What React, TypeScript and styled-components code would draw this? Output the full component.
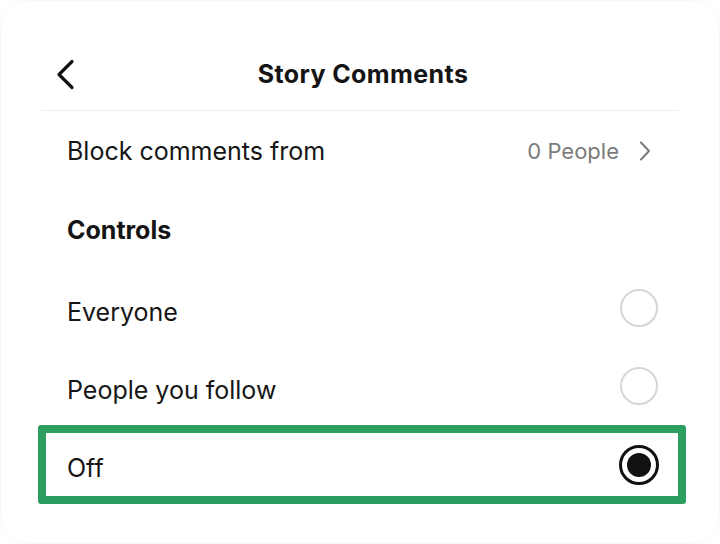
import React from "react";
import styled, { createGlobalStyle } from "styled-components";

const GlobalStyle = createGlobalStyle`
  html, body {
    margin: 0;
    padding: 0;
    background: #ffffff;
  }
  body {
    font-family: Inter, "Noto Sans", "Liberation Sans", sans-serif;
    color: #141414;
    -webkit-font-smoothing: antialiased;
  }
  * { box-sizing: border-box; }
`;

const Screen = styled.div`
  width: 720px;
  height: 544px;
  background: #ffffff;
  border: 1px solid #f7f7f7;
  border-radius: 30px;
  overflow: hidden;
  display: flex;
  flex-direction: column;
`;

const Header = styled.header`
  margin: 0 40px;
  padding-top: 37px;
  height: 110px;
  border-bottom: 1px solid #efefef;
`;

const HeaderBar = styled.div`
  height: 72px;
  display: grid;
  grid-template-columns: 1fr auto 1fr;
  align-items: center;
`;

const BackButton = styled.button`
  justify-self: start;
  margin-left: 14px;
  padding: 0;
  border: none;
  background: none;
  width: 20px;
  height: 31px;
  display: flex;
  align-items: center;
  justify-content: center;
  color: #111111;
`;

const Title = styled.h1`
  margin: 0;
  font-size: 25px;
  font-weight: 700;
  letter-spacing: 0.4px;
  color: #141414;
  padding-left: 6px;
`;

const Content = styled.main`
  padding: 0 60px 0 66px;
  display: flex;
  flex-direction: column;
`;

const LinkRow = styled.div`
  height: 80px;
  display: flex;
  align-items: center;
  justify-content: space-between;
`;

const RowLabel = styled.span<{ $drop?: boolean }>`
  font-size: 25px;
  font-weight: 400;
  color: #161616;
  margin-top: ${(p) => (p.$drop ? "7px" : "0")};
`;

const RowValue = styled.span`
  display: flex;
  align-items: center;
  gap: 20px;
  margin-right: 8px;
  font-size: 22px;
  color: #7b7b7b;
`;

const SectionTitle = styled.h2`
  margin: 0;
  height: 78px;
  display: flex;
  align-items: center;
  font-size: 25px;
  font-weight: 700;
  color: #141414;
`;

const Option = styled.div<{ $highlighted?: boolean }>`
  height: ${(p) => (p.$highlighted ? "79px" : "78px")};
  display: flex;
  align-items: center;
  justify-content: space-between;
  ${(p) =>
    p.$highlighted
      ? `
    margin: 0 -27px 0 -29px;
    padding: 0 19px 0 21px;
    border: 8px solid #2b9d5e;
    border-radius: 3px;
  `
      : ""}
`;

const Radio = styled.span<{ $checked?: boolean }>`
  flex: none;
  border-radius: 50%;
  display: flex;
  align-items: center;
  justify-content: center;
  ${(p) =>
    p.$checked
      ? `
    width: 40px;
    height: 40px;
    border: 3.5px solid #111111;
  `
      : `
    width: 38px;
    height: 38px;
    margin-right: 1px;
    border: 2px solid #d6d6d6;
  `}
`;

const RadioDot = styled.span`
  width: 24px;
  height: 24px;
  border-radius: 50%;
  background: #111111;
`;

const BackIcon = () => (
  <svg width="20" height="31" viewBox="0 0 20 31" fill="none">
    <path
      d="M17 2.5 L4 15.5 L17 28.5"
      stroke="currentColor"
      strokeWidth="3.2"
      strokeLinecap="round"
      strokeLinejoin="round"
    />
  </svg>
);

const ForwardIcon = () => (
  <svg width="12" height="20" viewBox="0 0 12 20" fill="none">
    <path
      d="M2 1.5 L10 10 L2 18.5"
      stroke="#7b7b7b"
      strokeWidth="2"
      strokeLinecap="round"
      strokeLinejoin="round"
    />
  </svg>
);

type Choice = { label: string; checked?: boolean };

const choices: Choice[] = [
  { label: "Everyone" },
  { label: "People you follow" },
  { label: "Off", checked: true },
];

export default function App() {
  return (
    <>
      <GlobalStyle />
      <Screen>
        <Header>
          <HeaderBar>
            <BackButton aria-label="Back">
              <BackIcon />
            </BackButton>
            <Title>Story Comments</Title>
            <span />
          </HeaderBar>
        </Header>
        <Content>
          <LinkRow>
            <RowLabel>Block comments from</RowLabel>
            <RowValue>
              0 People
              <ForwardIcon />
            </RowValue>
          </LinkRow>
          <SectionTitle>Controls</SectionTitle>
          {choices.map((c) => (
            <Option key={c.label} $highlighted={c.checked}>
              <RowLabel $drop>{c.label}</RowLabel>
              <Radio $checked={c.checked}>{c.checked && <RadioDot />}</Radio>
            </Option>
          ))}
        </Content>
      </Screen>
    </>
  );
}
